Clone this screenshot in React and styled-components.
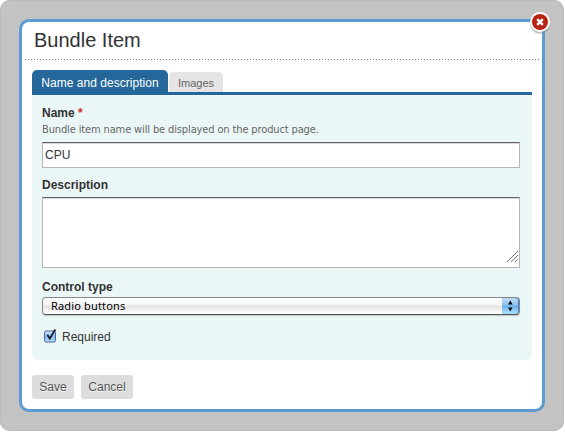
import React from 'react';
import styled, { createGlobalStyle } from 'styled-components';

const GlobalStyle = createGlobalStyle`
  * { box-sizing: border-box; }
  body { margin: 0; background: #fff; font-family: "Liberation Sans", Arial, sans-serif; color: #333; }
  button, input, textarea { font-family: inherit; margin: 0; }
`;

const Backdrop = styled.div`
  width: 564px;
  height: 431px;
  padding: 19px;
  border-radius: 10px;
  background: #c3c3c3;
  box-shadow: inset 0 0 0 1px #bababa;
`;

const Dialog = styled.section`
  position: relative;
  width: 526px;
  height: 393px;
  border: 3px solid #5c9ad0;
  border-radius: 10px;
  background: #fff;
`;

const CloseButton = styled.button`
  position: absolute;
  top: -10px;
  right: -9px;
  width: 22px;
  height: 24px;
  padding: 0;
  border: 0;
  background: none;
  svg { display: block; overflow: visible; }
`;

const Header = styled.header`
  height: 38px;
  margin: 0 2px 0 3px;
  padding-left: 9px;
  background: repeating-linear-gradient(90deg, #777 0 1px, transparent 1px 3px) 0 100% / 100% 1px no-repeat;
`;

const Title = styled.h1`
  margin: 0;
  font-size: 20px;
  line-height: 36px;
  font-weight: 400;
`;

const Content = styled.div`
  padding: 10px 10px 0;
`;

const Tabs = styled.div`
  display: flex;
  align-items: flex-end;
  gap: 1px;
  height: 25px;
  padding-bottom: 3px;
  background: linear-gradient(#25679a, #25679a) 0 100% / 100% 3px no-repeat;
`;

const Tab = styled.button`
  width: ${(p) => (p.$active ? 136 : 54)}px;
  height: ${(p) => (p.$active ? 22 : 20)}px;
  padding: ${(p) => (p.$active ? '4px 0 0' : '2px 0 0')};
  border: 0;
  border-radius: 5px 5px 0 0;
  background: ${(p) => (p.$active ? '#25679a' : '#e5e5e5')};
  color: ${(p) => (p.$active ? '#fff' : '#666')};
  font-size: ${(p) => (p.$active ? 12 : 11)}px;
  line-height: 16px;
  letter-spacing: ${(p) => (p.$active ? '0.03px' : '0')};
  white-space: nowrap;
`;

const Panel = styled.div`
  height: 265px;
  padding: 10px 12px 0 10px;
  border-radius: 0 0 5px 5px;
  background: #ebf7f7;
`;

const Label = styled.label`
  display: block;
  height: 16px;
  margin-top: ${(p) => p.$top || 0}px;
  font-size: 12px;
  line-height: 16px;
  font-weight: 700;
`;

const Star = styled.span`
  color: #d4281c;
`;

const Hint = styled.p`
  height: 16px;
  margin: 0 0 5px;
  padding-top: 1px;
  color: #666;
  font: 11px/16px "DejaVu Sans Condensed", "DejaVu Sans", sans-serif;
  font-stretch: condensed;
  letter-spacing: -0.13px;
  white-space: nowrap;
`;

const fieldEdges = `
  display: block;
  width: 478px;
  border: 1px solid #b5b8b8;
  border-top-color: #606363;
  border-radius: 0;
  background: #fff;
  box-shadow: inset 0 1px 0 #d9d9d9;
  color: #333;
  font-size: 12px;
  outline: 0;
`;

const TextInput = styled.input`
  ${fieldEdges}
  height: 26px;
  padding: 0 2px 1px;
`;

const TextAreaFrame = styled.div`
  position: relative;
  margin-top: 4px;
`;

const TextArea = styled.textarea`
  ${fieldEdges}
  height: 71px;
  resize: none;
`;

const Grip = styled.svg`
  position: absolute;
  right: 2px;
  bottom: 6px;
`;

const Select = styled.div`
  display: flex;
  justify-content: space-between;
  width: 478px;
  height: 18px;
  margin-top: 2px;
  overflow: hidden;
  border: 1px solid #858888;
  border-bottom-color: #555;
  border-radius: 4px;
  background: linear-gradient(#fff 0, #f3f3f3 45%, #e2e2e2 50%, #fff 95%);
  box-shadow: 0 1px 1px #bcc5c5;
  color: #000;
  font: 11px/15px "Noto Sans", sans-serif;
  letter-spacing: 0.15px;
`;

const SelectText = styled.span`
  padding-left: 8px;
`;

const Stepper = styled.span`
  width: 18px;
  height: 18px;
  margin: -1px -1px -1px 0;
  border: 1px solid #283f98;
  border-width: 1px 1px 1px 0;
  border-radius: 0 4px 4px 0;
  background: linear-gradient(#c5dff6 0, #8cbff0 45%, #69adea 50%, #b4e6ff 100%);
  box-shadow: inset -1px 0 1px #3c80cd;
  svg { display: block; }
`;

const CheckRow = styled.label`
  display: flex;
  align-items: center;
  gap: 5px;
  height: 16px;
  margin: 14px 0 0 2px;
  font-size: 12px;
  svg { flex: none; overflow: visible; }
`;

const Actions = styled.footer`
  display: flex;
  gap: 7px;
  margin-top: 15px;
`;

const ActionButton = styled.button`
  width: ${(p) => p.$width}px;
  height: 24px;
  padding: 0;
  border: 0;
  border-radius: 3px;
  background: #ddd;
  color: #555;
  font-size: 12px;
  line-height: 24px;
  text-shadow: 0 1px 0 #f5f5f5;
`;

export default function App() {
  return (
    <>
      <GlobalStyle />
      <Backdrop>
        <Dialog>
          <Header><Title>Bundle Item</Title></Header>
          <Content>
            <Tabs>
              <Tab $active>Name and description</Tab>
              <Tab>Images</Tab>
            </Tabs>
            <Panel>
              <Label>Name <Star>*</Star></Label>
              <Hint>Bundle item name will be displayed on the product page.</Hint>
              <TextInput defaultValue="CPU" aria-label="Name" />
              <Label $top={9}>Description</Label>
              <TextAreaFrame>
                <TextArea aria-label="Description" />
                <Grip width="11" height="11" viewBox="0 0 11 11" stroke="#777" strokeWidth="1">
                  <path d="M0 11 11 0M4 11l7-7M8 11l3-3" />
                </Grip>
              </TextAreaFrame>
              <Label $top={11}>Control type</Label>
              <Select>
                <SelectText>Radio buttons</SelectText>
                <Stepper>
                  <svg width="17" height="16" viewBox="0 0 17 16">
                    <path d="M6 6.5 8.3 2.5l2.3 4zM6 9.5h4.6l-2.3 4z" fill="#080c14" />
                  </svg>
                </Stepper>
              </Select>
              <CheckRow>
                <svg width="13" height="14" viewBox="0 0 13 14">
                  <defs>
                    <linearGradient id="check" x2="0" y2="1">
                      <stop stopColor="#d9e9fa" />
                      <stop offset=".5" stopColor="#83b9ef" />
                      <stop offset="1" stopColor="#b2e2ff" />
                    </linearGradient>
                  </defs>
                  <rect x=".5" y="1" width="11" height="11" rx="1.5" fill="url(#check)" stroke="#4b6799" />
                  <path d="M3.3 4.7 5.8 8.5 11.3-.5" fill="none" stroke="#1c2432" strokeWidth="1.9" />
                </svg>
                Required
              </CheckRow>
            </Panel>
            <Actions>
              <ActionButton $width={42}>Save</ActionButton>
              <ActionButton $width={52}>Cancel</ActionButton>
            </Actions>
          </Content>
          <CloseButton aria-label="Close">
            <svg width="22" height="24" viewBox="0 0 22 24">
              <ellipse cx="11" cy="12" rx="10" ry="9.8" fill="#777" opacity=".45" />
              <circle cx="11" cy="10" r="10" fill="#fff" />
              <circle cx="11" cy="10" r="8" fill="#b92313" />
              <path d="m8.2 7.2 5.6 5.6m0-5.6-5.6 5.6" stroke="#fff" strokeWidth="2.4" />
            </svg>
          </CloseButton>
        </Dialog>
      </Backdrop>
    </>
  );
}
